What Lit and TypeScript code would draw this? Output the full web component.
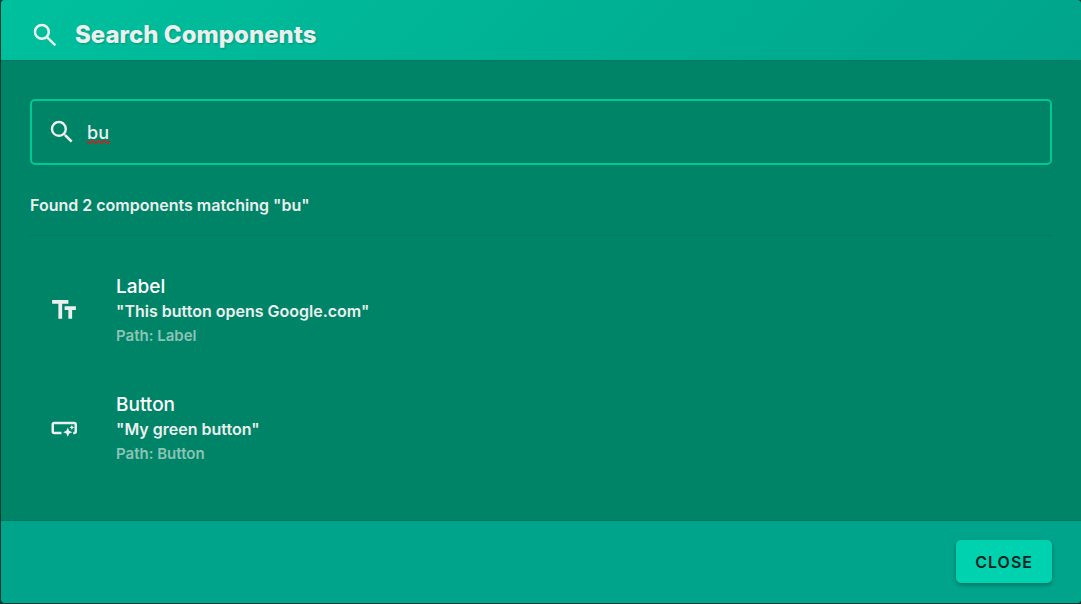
import { LitElement, html, svg, css } from "lit";
import { customElement, state } from "lit/decorators.js";

const searchIcon = svg`<path d="M15.5 14h-.79l-.28-.27A6.47 6.47 0 0 0 16 9.5 6.5 6.5 0 1 0 9.5 16c1.61 0 3.09-.59 4.23-1.57l.27.28v.79l5 4.99L20.49 19l-4.99-5zm-6 0C7.01 14 5 11.99 5 9.5S7.01 5 9.5 5 14 7.01 14 9.5 11.99 14 9.5 14z"/>`;
const headerSearchIcon = svg`<path d="m19.6 21-6.3-6.3q-.75.6-1.725.95T9.5 16q-2.725 0-4.612-1.888T3 9.5t1.888-4.612T9.5 3t4.613 1.888T16 9.5q0 1.1-.35 2.075T14.7 13.3l6.3 6.3zM9.5 14q1.875 0 3.188-1.312T14 9.5t-1.312-3.187T9.5 5 6.313 6.313 5 9.5t1.313 3.188T9.5 14"/>`;

const icons = {
  label: svg`<path d="M2.5 4v3h5v12h3V7h5V4zm19 5h-9v3h3v7h3v-7h3z"/>`,
  button: svg`<path d="M22.4 9v6c0 1.1-.9 2-2 2h-1v-2h1V9H4v6h6v2H4c-1.1 0-2-.9-2-2V9c0-1.1.9-2 2-2h16.4c1.1 0 2 .9 2 2M15 19l1.15-2.55 2.55-1.15-2.55-1.15L15 11.6l-1.15 2.55-2.55 1.15 2.55 1.15zm3.3-5.5.62-1.38 1.38-.62-1.38-.62-.62-1.38-.62 1.38-1.38.62 1.38.62z"/>`,
};

interface Result {
  icon: keyof typeof icons;
  name: string;
  text: string;
}

@customElement("app-root")
export class AppRoot extends LitElement {
  @state() private query = "bu";

  private results: Result[] = [
    { icon: "label", name: "Label", text: "This button opens Google.com" },
    { icon: "button", name: "Button", text: "My green button" },
  ];

  static styles = css`
    :host {
      display: block;
      background: #003c31;
      font-family: Inter, "Open Sans", sans-serif;
      color: #ebf0ee;
    }
    * {
      box-sizing: border-box;
    }
    .dialog {
      display: flex;
      flex-direction: column;
      min-height: calc(100vh - 1px);
      margin: 0 0 0 1px;
      border-radius: 4px;
      overflow: hidden;
      background: #008468;
    }
    .page {
      padding-bottom: 1px;
    }
    svg {
      display: block;
      fill: currentColor;
      flex: none;
    }
    header {
      display: flex;
      align-items: center;
      gap: 15px;
      height: 61px;
      padding: 9px 29px 0;
      background: linear-gradient(135deg, #00c09d, #00a48b);
      border-bottom: 1px solid #00775e;
    }
    h1 {
      margin: 0;
      font-size: 24px;
      line-height: 32px;
      font-weight: 800;
      text-shadow: 1px 1px 2px rgba(0, 0, 0, 0.2);
    }
    main {
      flex: 1;
      padding: 38px 29px 24px;
    }
    .field {
      display: flex;
      align-items: center;
      gap: 10px;
      height: 66px;
      padding: 0 15px;
      border: 2px solid #00c897;
      border-radius: 5px;
    }
    .entry {
      position: relative;
      flex: 1;
    }
    input {
      display: block;
      width: 100%;
      padding: 2px 0 0;
      border: 0;
      outline: 0;
      background: none;
      font: 500 18px/28px Inter, "Open Sans", sans-serif;
      color: #ebf0ee;
    }
    .spelling {
      position: absolute;
      left: 0;
      bottom: 3px;
      fill: none;
      stroke: #e01818;
      stroke-width: 1.4;
    }
    .summary {
      margin: 0;
      padding: 28px 0 17px;
      border-bottom: 1px solid #00775e;
      font-size: 16px;
      line-height: 25px;
      font-weight: 600;
    }
    ul {
      list-style: none;
      margin: 0;
      padding: 15px 0 0;
    }
    li {
      display: flex;
      align-items: center;
      gap: 37px;
      height: 118px;
      padding: 0 19px;
    }
    .details {
      padding-top: 4px;
    }
    h2,
    .text,
    .path {
      margin: 0;
    }
    h2 {
      font-size: 19px;
      line-height: 24px;
      font-weight: 500;
      color: #fff;
    }
    .text {
      font-size: 16px;
      line-height: 24px;
      font-weight: 600;
    }
    .path {
      font-size: 15px;
      line-height: 26px;
      font-weight: 600;
      color: #8dc3b5;
    }
    footer {
      display: flex;
      justify-content: flex-end;
      padding: 19px 29px 20px;
      background: #00a48b;
      border-top: 1px solid #00775e;
    }
    button {
      height: 43px;
      padding: 0 19px;
      border: 0;
      border-radius: 5px;
      background: #00d1ae;
      color: #10231f;
      font: 600 16px/24px Inter, "Open Sans", sans-serif;
      letter-spacing: 1px;
      box-shadow: 0 2px 4px rgba(0, 0, 0, 0.3);
      cursor: pointer;
    }
  `;

  private onInput(event: Event) {
    this.query = (event.target as HTMLInputElement).value;
  }

  render() {
    return html`
      <div class="page">
        <section class="dialog" role="dialog" aria-labelledby="title">
          <header>
            <svg width="30" height="30" viewBox="0 0 24 24" aria-hidden="true">${headerSearchIcon}</svg>
            <h1 id="title">Search Components</h1>
          </header>
          <main>
            <label class="field">
              <svg width="30" height="30" viewBox="0 0 24 24" aria-hidden="true">${searchIcon}</svg>
              <span class="entry">
                <input type="text" aria-label="Search components" spellcheck="false" .value=${this.query} @input=${this.onInput} />
                ${this.query === "bu"
                  ? html`<svg class="spelling" width="23" height="4" viewBox="0 0 23 4" aria-hidden="true">
                      <path d="M0 1l2 2h1l2-2h1l2 2h1l2-2h1l2 2h1l2-2h1l2 2h1l2-2" />
                    </svg>`
                  : ""}
              </span>
            </label>
            <p class="summary">Found ${this.results.length} components matching "${this.query}"</p>
            <ul>
              ${this.results.map(
                (item) => html`<li>
                  <svg width="30" height="30" viewBox="0 0 24 24" aria-hidden="true">${icons[item.icon]}</svg>
                  <div class="details">
                    <h2>${item.name}</h2>
                    <p class="text">"${item.text}"</p>
                    <p class="path">Path: ${item.name}</p>
                  </div>
                </li>`
              )}
            </ul>
          </main>
          <footer><button type="button">CLOSE</button></footer>
        </section>
      </div>
    `;
  }
}
